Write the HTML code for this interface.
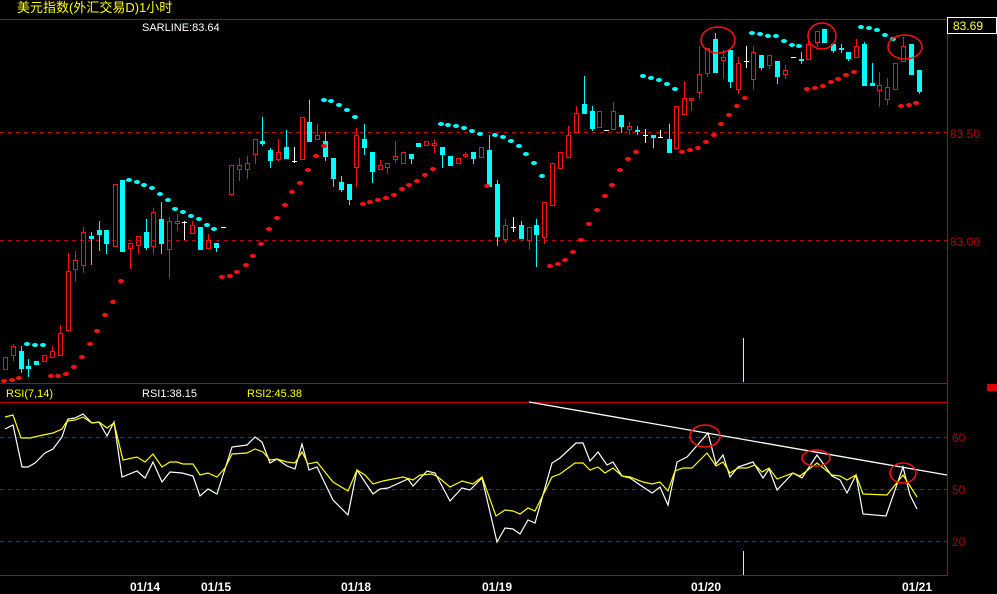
<!DOCTYPE html>
<html><head><meta charset="utf-8"><style>
html,body{margin:0;padding:0;background:#000;width:997px;height:594px;overflow:hidden}
svg{display:block}
text{font-family:"Liberation Sans","Noto Sans CJK SC",sans-serif}
</style></head><body>
<svg id="s" width="997" height="594" xmlns="http://www.w3.org/2000/svg">
<rect width="997" height="594" fill="#000"/>
<g stroke="#c00000" stroke-width="1" shape-rendering="crispEdges">
<line x1="0" y1="19.5" x2="947" y2="19.5"/>
<line x1="0" y1="383.5" x2="947" y2="383.5"/>
<line x1="0" y1="402.5" x2="947" y2="402.5"/>
<line x1="0" y1="575.5" x2="947" y2="575.5"/>
<line x1="947.5" y1="19" x2="947.5" y2="576"/>
<g stroke-dasharray="4,4">
<line x1="0" y1="132.5" x2="947" y2="132.5"/>
<line x1="0" y1="240.5" x2="947" y2="240.5"/>
<line x1="0" y1="437.5" x2="947" y2="437.5"/>
<line x1="0" y1="489.5" x2="947" y2="489.5"/>
<line x1="0" y1="541.5" x2="947" y2="541.5"/>
</g></g>
<rect x="987" y="384" width="10" height="7" fill="#e00000"/>
<rect x="947.5" y="17.5" width="49" height="16" fill="#000" stroke="#fff"/>
<text x="953" y="30" fill="#ffff40" font-size="12">83.69</text>
<g fill="#b00000" font-size="12">
<text x="950" y="138">83.50</text><text x="950" y="246">83.00</text>
<text x="952" y="442">60</text><text x="952" y="494">50</text><text x="952" y="546">20</text>
</g>
<text x="17" y="12" fill="#ffff00" font-size="13">美元指数(外汇交易D)1小时</text>
<text x="142" y="31" fill="#fff" font-size="11">SARLINE:83.64</text>
<text x="6" y="397" fill="#ffff00" font-size="11">RSI(7,14)</text>
<text x="142" y="397" fill="#fff" font-size="11">RSI1:38.15</text>
<text x="247" y="397" fill="#ffff00" font-size="11">RSI2:45.38</text>
<g fill="#fff" font-size="12" font-weight="bold" font-family="Liberation Mono,monospace">
<text x="130" y="591" font-family="Liberation Mono,monospace">01/14</text>
<text x="201" y="591" font-family="Liberation Mono,monospace">01/15</text>
<text x="341" y="591" font-family="Liberation Mono,monospace">01/18</text>
<text x="482" y="591" font-family="Liberation Mono,monospace">01/19</text>
<text x="691" y="591" font-family="Liberation Mono,monospace">01/20</text>
<text x="902" y="591" font-family="Liberation Mono,monospace">01/21</text>
</g>
<g stroke="#ffff00" shape-rendering="crispEdges">
<line x1="743.5" y1="338" x2="743.5" y2="382"/>
<line x1="743.5" y1="551" x2="743.5" y2="575"/>
</g>
<g id="c"></g>
<line x1="529" y1="402" x2="947" y2="475" stroke="#fff" stroke-width="1.3"/>
<g fill="none" stroke="#ff1010" stroke-width="1.5">
<ellipse cx="718" cy="40" rx="17" ry="13"/>
<ellipse cx="822" cy="36" rx="14" ry="13"/>
<ellipse cx="905" cy="47" rx="17" ry="12"/>
<ellipse cx="705" cy="436" rx="15" ry="11"/>
<ellipse cx="816" cy="458" rx="14" ry="8"/>
<ellipse cx="903" cy="473" rx="13" ry="10"/>
</g>
</svg>
<script>
var C=[[5,357,369,357,369,'r'],[13,346,355,344,361,'r'],[21,351,369,346,373,'c'],[28,366,369,359,377,'c'],[36,361,365,361,365,'c'],[44,355,361,355,361,'r'],[52,351,357,346,357,'r'],[60,333,355,325,355,'r'],[68,271,330,253,330,'r'],[75,260,269,251,282,'r'],[83,232,265,227,273,'r'],[91,236,239,232,265,'c'],[99,230,235,221,251,'c'],[106,230,244,230,254,'c'],[115,184,246,184,246,'r'],[122,180,252,180,252,'c'],[130,243,248,243,269,'r'],[138,236,245,236,254,'r'],[146,232,248,219,250,'c'],[153,212,246,208,254,'r'],[161,219,244,202,254,'c'],[169,221,249,217,278,'r'],[177,221,223,214,231,'r'],[184,222,223,221,240,'w'],[192,225,233,221,233,'r'],[200,227,250,227,250,'c'],[208,240,248,234,248,'r'],[216,243,248,243,252,'c'],[223,227,228,227,228,'w'],
[231,165,194,165,194,'r'],[239,165,169,158,181,'r'],[247,163,169,156,179,'r'],[255,139,154,139,164,'r'],[262,141,144,117,146,'c'],[270,150,161,148,168,'c'],[278,152,159,139,161,'r'],[286,147,159,130,159,'c'],[294,161,162,147,163,'w'],[302,117,159,117,159,'r'],[309,122,142,100,142,'c'],[317,135,139,124,139,'r'],[325,141,157,132,161,'c'],[333,158,179,158,187,'c'],[341,182,190,176,192,'c'],[349,184,200,184,205,'c'],[356,135,167,128,187,'r'],[364,139,148,124,155,'c'],[372,152,172,152,183,'c'],[380,165,169,160,169,'r'],[387,163,167,163,174,'r'],[395,156,159,141,163,'r'],[403,152,163,152,163,'r'],[411,154,159,154,164,'c'],[418,143,147,143,147,'c'],[426,141,145,141,145,'r'],[434,143,145,139,153,'r'],[442,147,155,147,168,'c'],[450,156,166,156,166,'c'],[458,158,163,158,163,'r'],[465,154,156,152,158,'r'],[473,152,159,152,164,'c'],[481,147,157,147,157,'r'],[489,150,187,135,187,'c'],[497,184,237,180,246,'c'],[505,225,239,219,243,'r'],[513,227,228,217,232,'w'],[521,225,239,221,239,'c'],[529,227,240,227,250,'r'],[536,225,235,219,267,'c'],[544,202,237,202,244,'r'],[552,163,205,163,205,'r'],
[560,152,168,152,168,'r'],[568,135,157,126,157,'r'],[576,113,132,106,132,'r'],[584,104,114,76,114,'c'],[592,111,129,106,131,'c'],[599,111,127,111,127,'r'],[606,130,131,130,131,'w'],[613,111,129,102,129,'r'],[621,115,127,115,133,'c'],[629,126,129,122,135,'r'],[637,130,132,126,135,'c'],[645,135,136,129,143,'w'],[653,135,138,135,148,'c'],[660,137,138,130,138,'w'],[669,139,153,124,153,'c'],[676,106,148,106,148,'r'],[684,98,114,81,114,'r'],[691,98,100,98,111,'r'],[699,74,92,46,99,'r'],[707,48,73,48,77,'r'],[715,39,73,33,73,'c'],[723,57,60,50,79,'r'],[730,50,82,50,88,'c'],[738,63,89,57,94,'r'],[746,61,62,46,68,'w'],[753,52,79,46,90,'r'],[761,55,68,55,70,'c'],[769,55,65,55,69,'r'],[777,61,77,61,84,'c'],[785,70,74,65,79,'r'],[793,57,58,57,58,'w'],[801,59,61,52,64,'c'],[808,44,59,36,59,'r'],[817,31,42,31,47,'r'],[824,29,43,29,43,'c'],[833,44,51,44,53,'c'],[841,48,50,44,53,'c'],[848,52,59,52,61,'c'],[856,46,57,39,57,'r'],[864,44,86,42,86,'c'],[872,83,86,63,86,'c'],[879,85,90,72,107,'r'],[887,87,99,78,105,'r'],[895,63,89,63,89,'r'],[903,46,61,37,61,'r'],[911,44,75,44,75,'c'],[919,70,92,70,94,'c']];
var cy=[[27,344],[35,345],[43,345],[129,180],[137,182],[144,185],[152,188],[160,194],[168,200],[175,209],[183,212],[191,216],[199,219],[207,225],[214,229],[324,100],[331,101],[339,105],[347,110],[355,117],[441,124],[448,125],[456,126],[464,128],[472,131],[480,134],[495,135],[503,137],[511,141],[519,146],[526,154],[534,163],[542,176],[643,76],[651,78],[659,80],[667,84],[675,89],[752,33],[760,34],[768,36],[776,36],[784,41],[792,45],[799,46],[861,27],[869,28],[877,30],[885,35],[893,39]];
var rd=[[4,381],[12,380],[19,378],[51,376],[58,376],[66,374],[74,367],[82,357],[90,344],[97,331],[105,315],[113,302],[121,281],[222,277],[230,276],[237,272],[246,265],[253,256],[261,244],[269,229],[277,218],[285,205],[292,192],[300,183],[308,170],[316,156],[324,146],[363,204],[370,202],[378,200],[386,198],[394,195],[402,189],[409,185],[417,181],[425,175],[433,169],[487,186],[550,266],[558,264],[565,260],[573,252],[581,240],[589,224],[597,210],[605,196],[612,185],[620,170],[628,159],[636,152],[682,152],[690,150],[698,148],[706,142],[714,135],[721,124],[729,115],[737,106],[745,98],[807,89],[815,88],[823,86],[831,82],[838,79],[846,75],[854,72],[901,106],[909,105],[916,103]];
var yl=[[5,417],[13,415],[21,438],[30,438],[43,435],[53,433],[62,429],[67,421],[75,420],[83,417],[92,423],[99,422],[107,428],[114,423],[123,460],[137,457],[145,462],[153,454],[162,467],[170,462],[177,462],[183,464],[193,464],[200,475],[208,473],[217,477],[225,468],[232,454],[247,453],[255,449],[263,452],[270,460],[277,459],[287,462],[295,463],[302,452],[308,464],[317,462],[333,482],[348,491],[357,470],[365,475],[373,484],[383,481],[403,477],[413,480],[420,475],[432,474],[438,477],[450,487],[462,481],[473,484],[482,477],[496,516],[505,510],[513,511],[520,514],[528,508],[535,511],[552,477],[560,474],[575,463],[583,463],[590,470],[598,467],[605,473],[613,468],[622,476],[630,477],[643,482],[652,484],[660,482],[668,491],[675,471],[683,468],[692,468],[707,453],[716,466],[723,462],[730,473],[738,468],[747,468],[755,465],[762,472],[769,468],[777,479],[793,473],[800,476],[817,463],[832,475],[840,476],[847,480],[856,475],[863,494],[887,495],[903,475],[917,497]];
var wl=[[5,429],[13,425],[22,467],[28,467],[35,463],[45,453],[53,449],[62,437],[68,419],[75,418],[83,414],[92,423],[99,422],[107,436],[114,422],[122,477],[137,471],[145,478],[153,462],[162,482],[170,472],[182,473],[193,476],[200,496],[208,489],[217,494],[232,447],[247,445],[255,437],[262,442],[270,463],[277,459],[287,466],[295,469],[302,444],[309,470],[317,467],[333,500],[348,515],[357,470],[373,494],[380,489],[388,488],[408,479],[413,486],[427,471],[435,473],[450,501],[462,488],[470,490],[482,478],[497,542],[505,528],[513,529],[520,534],[528,520],[535,523],[552,463],[560,458],[576,443],[583,443],[590,461],[598,452],[607,465],[613,462],[622,476],[630,478],[643,487],[652,493],[660,487],[668,505],[677,462],[687,457],[708,433],[716,464],[723,455],[730,477],[738,467],[753,462],[763,478],[769,469],[777,490],[793,473],[802,478],[817,455],[832,476],[840,480],[847,493],[856,475],[863,514],[886,516],[903,467],[910,495],[917,509]];
var h='';
C.forEach(function(k){var x=k[0],t=k[1],b=k[2],wt=k[3],wb=k[4],c=k[5];
var col=c=='r'?'#ff1010':c=='c'?'#00ffff':'#ffffff';
if(wt<t)h+='<line x1="'+(x+.5)+'" y1="'+wt+'" x2="'+(x+.5)+'" y2="'+t+'" stroke="'+col+'"/>';
if(wb>b)h+='<line x1="'+(x+.5)+'" y1="'+b+'" x2="'+(x+.5)+'" y2="'+wb+'" stroke="'+col+'"/>';
if(c=='r')h+='<rect x="'+(x-1.5)+'" y="'+(t+.5)+'" width="4" height="'+Math.max(1,b-t)+'" fill="none" stroke="'+col+'"/>';
else if(c=='c')h+='<rect x="'+(x-2)+'" y="'+t+'" width="5" height="'+Math.max(2,b-t)+'" fill="'+col+'"/>';
else h+='<line x1="'+(x-2)+'" y1="'+(t+.5)+'" x2="'+(x+3)+'" y2="'+(t+.5)+'" stroke="#fff"/>';});
cy.forEach(function(p){h+='<ellipse cx="'+p[0]+'" cy="'+p[1]+'" rx="3" ry="2" fill="#00ffff"/>';});
rd.forEach(function(p){h+='<ellipse cx="'+p[0]+'" cy="'+p[1]+'" rx="3" ry="2" fill="#ff1010"/>';});
function pl(a,c){return '<polyline fill="none" stroke="'+c+'" stroke-width="1.2" points="'+a.map(function(p){return p.join(',')}).join(' ')+'"/>';}
h+=pl(wl,'#ffffff')+pl(yl,'#ffff00');
document.getElementById('c').innerHTML=h;
</script>
</body></html>
